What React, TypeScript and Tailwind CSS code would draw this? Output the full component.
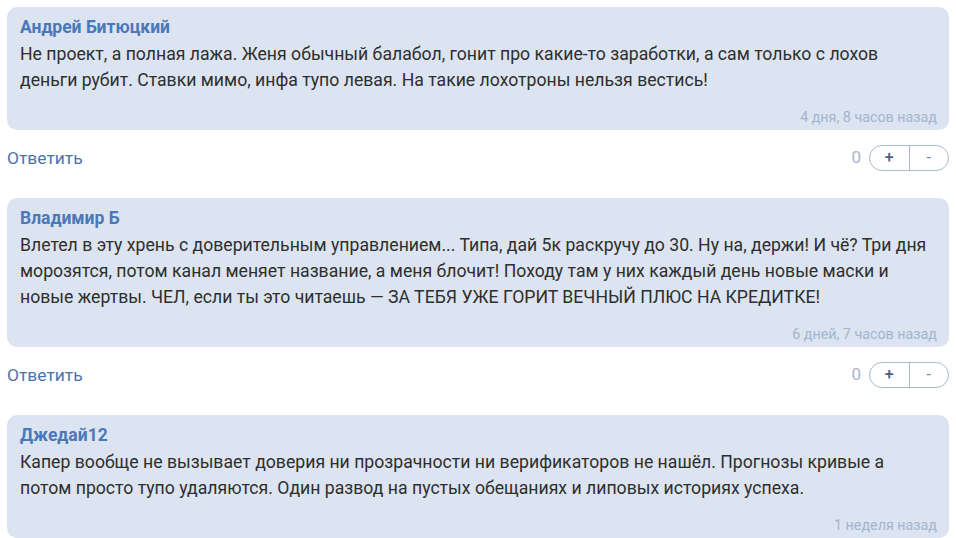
import React from 'react';

interface Comment {
    author: string;
    lines: string[];
    time: string;
    score: number;
}

const comments: Comment[] = [
    {
        author: 'Андрей Битюцкий',
        lines: [
            'Не проект, а полная лажа. Женя обычный балабол, гонит про какие-то заработки, а сам только с лохов',
            'деньги рубит. Ставки мимо, инфа тупо левая. На такие лохотроны нельзя вестись!',
        ],
        time: '4 дня, 8 часов назад',
        score: 0,
    },
    {
        author: 'Владимир Б',
        lines: [
            'Влетел в эту хрень с доверительным управлением... Типа, дай 5к раскручу до 30. Ну на, держи! И чё? Три дня',
            'морозятся, потом канал меняет название, а меня блочит! Походу там у них каждый день новые маски и',
            'новые жертвы. ЧЕЛ, если ты это читаешь — ЗА ТЕБЯ УЖЕ ГОРИТ ВЕЧНЫЙ ПЛЮС НА КРЕДИТКЕ!',
        ],
        time: '6 дней, 7 часов назад',
        score: 0,
    },
    {
        author: 'Джедай12',
        lines: [
            'Капер вообще не вызывает доверия ни прозрачности ни верификаторов не нашёл. Прогнозы кривые а',
            'потом просто тупо удаляются. Один развод на пустых обещаниях и липовых историях успеха.',
        ],
        time: '1 неделя назад',
        score: 0,
    },
];

function CommentCard({ c }: { c: Comment }) {
    return (
        <div>
            <div className="bg-[#dbe4f0] rounded-[10px] pl-[13px] pr-[12px] pt-[10px] pb-[4px]">
                <div className="text-[17.5px] leading-[20px] font-bold text-[#4a78b8]">{c.author}</div>
                <div className="mt-[4px] text-[17.65px] leading-[26px] text-[#2e2e2e]">
                    {c.lines.map((l, i) => (
                        <div key={i} className="whitespace-nowrap">{l}</div>
                    ))}
                </div>
                <div className="mt-[15px] text-right text-[14.3px] leading-[18px] text-[#a3b5d1]">{c.time}</div>
            </div>
            <div className="flex items-center justify-between mt-[15px] h-[26px]">
                <button className="text-[17.4px] text-[#4c72aa]">Ответить</button>
                <div className="flex items-center">
                    <span className="text-[17px] text-[#a8b6cb] mr-[8px]">{c.score}</span>
                    <div className="flex h-[26px] w-[80px] border border-[#a9b8cd] rounded-full">
                        <button className="flex-1 flex items-center justify-center text-[16px] font-medium text-[#4b5f7d] border-r border-[#a9b8cd]">+</button>
                        <button className="flex-1 flex items-center justify-center text-[16px] text-[#7286a3]">-</button>
                    </div>
                </div>
            </div>
        </div>
    );
}

export default function App() {
    return (
        <div className="bg-white w-[956px] h-[538px] overflow-hidden px-[7px] pt-[7px] font-['Roboto',sans-serif]">
            <div className="flex flex-col gap-[27px]">
                {comments.map((c, i) => (
                    <CommentCard key={i} c={c} />
                ))}
            </div>
        </div>
    );
}
